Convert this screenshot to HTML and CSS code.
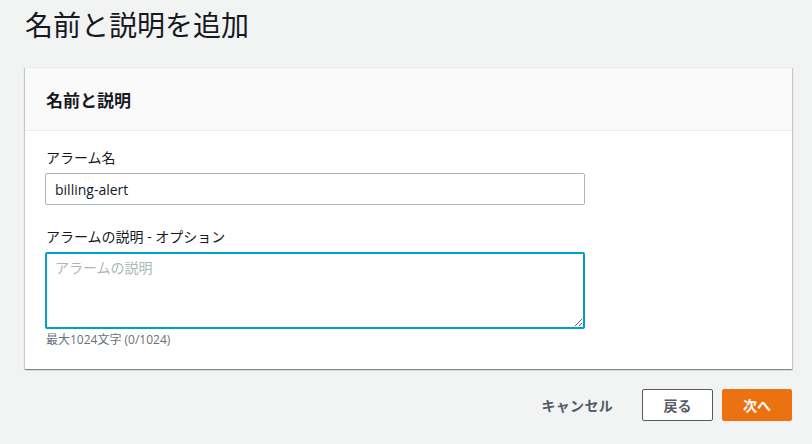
FILE: index.html
```html
<!DOCTYPE html>
<html lang="ja">
<head>
  <meta charset="UTF-8">
  <meta name="viewport" content="width=device-width, initial-scale=1.0">
  <title>名前と説明を追加</title>
  <link rel="stylesheet" href="styles.css">
</head>
<body>
  <div class="page">
    <h1 class="page-title">名前と説明を追加</h1>

    <!-- 名前と説明 -->
    <div class="card">
      <div class="card-header">
        <h2>名前と説明</h2>
      </div>
      <div class="card-body">
        <div class="form-field">
          <label for="alarmName">アラーム名</label>
          <input type="text" id="alarmName" class="text-input" value="billing-alert">
        </div>
        <div class="form-field">
          <label for="alarmDesc">アラームの説明 - オプション</label>
          <textarea id="alarmDesc" class="text-area focused" placeholder="アラームの説明"></textarea>
          <div class="hint">最大1024文字 (0/1024)</div>
        </div>
      </div>
    </div>

    <div class="actions">
      <button class="btn btn-link">キャンセル</button>
      <button class="btn btn-normal">戻る</button>
      <button class="btn btn-primary">次へ</button>
    </div>
  </div>
</body>
</html>
```

FILE: styles.css
```css
:root {
  --page-bg: #f2f3f3;
  --text: #16191f;
  --muted: #687078;
  --border: #aab7b8;
  --focus: #00a1c9;
  --orange: #ec7211;
  --divider: #eaeded;
}

* {
  margin: 0;
  padding: 0;
  box-sizing: border-box;
}

body {
  font-family: "Open Sans", "Noto Sans CJK JP", sans-serif;
  background: var(--page-bg);
  color: var(--text);
  font-size: 14px;
}

.page {
  padding: 0 20px 0 25px;
}

.page-title {
  font-size: 28px;
  font-weight: 400;
  line-height: 40px;
  padding-top: 5px;
  margin-bottom: 22px;
}

.card {
  background: #fff;
  box-shadow: 0 1px 1px 0 rgba(0, 28, 36, 0.3), 1px 1px 1px 0 rgba(0, 28, 36, 0.15), -1px 1px 1px 0 rgba(0, 28, 36, 0.15);
  border-top: 1px solid #eaeded;
}

.card-header {
  background: #fafafa;
  border-bottom: 1px solid var(--divider);
  height: 63px;
  display: flex;
  align-items: center;
  padding: 0 21px;
}

.card-header h2 {
  font-size: 17px;
  font-weight: 700;
}

.card-body {
  padding: 16px 20px 20px;
}

.form-field {
  margin-bottom: 21px;
}

.form-field:last-child {
  margin-bottom: 0;
}

label {
  display: block;
  font-size: 14px;
  line-height: 22px;
  margin-bottom: 4px;
  padding-left: 1px;
}

.text-input,
.text-area {
  display: block;
  width: 540px;
  font-family: inherit;
  font-size: 14px;
  color: var(--text);
  border: 1px solid var(--border);
  border-radius: 2px;
  background: #fff;
  outline: none;
}

.text-input {
  height: 32px;
  padding: 0 9px;
}

.text-area {
  height: 77px;
  padding: 4px 9px;
  line-height: 22px;
  resize: vertical;
}

.text-area.focused {
  border: 2px solid var(--focus);
  padding: 3px 8px;
}

.text-area::placeholder {
  color: var(--border);
}

.hint {
  font-size: 12px;
  color: var(--muted);
  line-height: 18px;
  margin-top: 2px;
  padding-left: 1px;
}

.actions {
  display: flex;
  justify-content: flex-end;
  align-items: center;
  gap: 9px;
  margin-top: 20px;
}

.btn {
  font-family: inherit;
  font-size: 14px;
  font-weight: 700;
  height: 32px;
  border-radius: 2px;
  cursor: pointer;
  padding: 0 20px;
}

.btn-link {
  background: none;
  border: none;
  color: #545b64;
  letter-spacing: 0.3px;
}

.btn-normal {
  background: #fff;
  border: 1px solid #545b64;
  color: #545b64;
  width: 71px;
}

.btn-primary {
  background: var(--orange);
  border: 1px solid var(--orange);
  color: #fff;
  width: 70px;
}
```
